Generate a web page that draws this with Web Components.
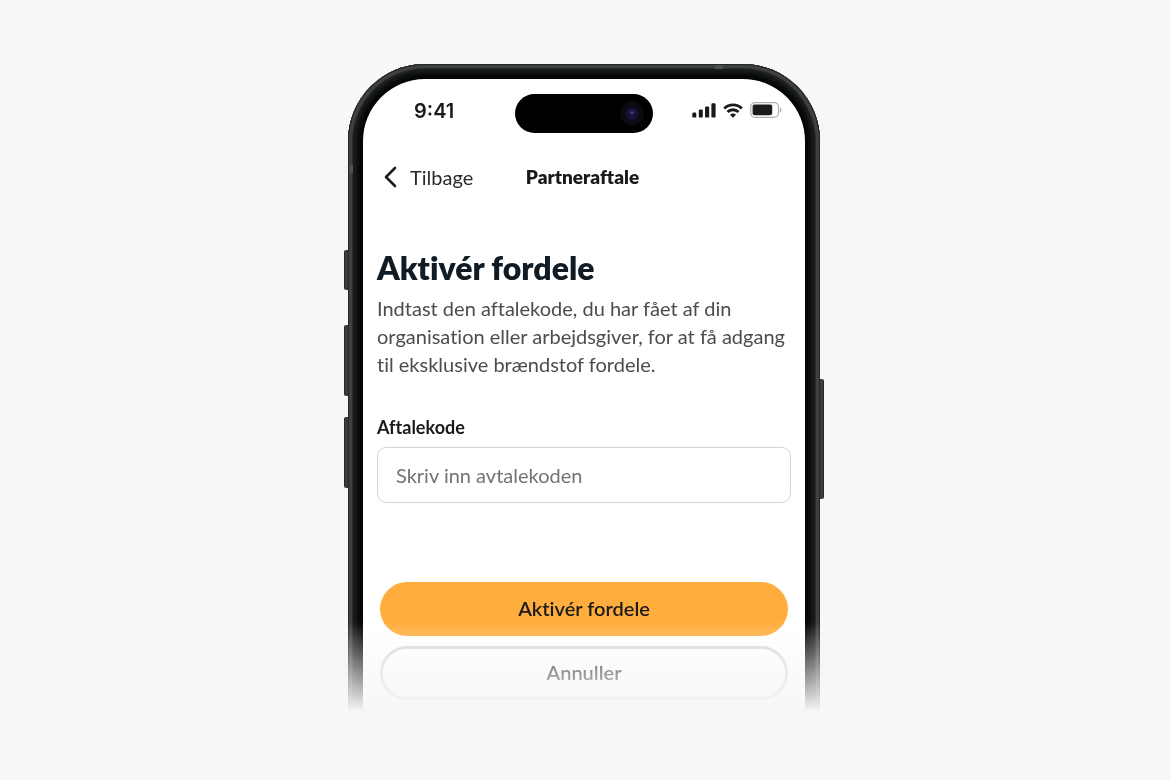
<!DOCTYPE html>
<html lang="da">
<head>
<meta charset="utf-8">
<meta name="viewport" content="width=device-width, initial-scale=1">
<title>Partneraftale</title>
<style>
  body { margin: 0; background: #f8f7f5; font-family: Lato, "Open Sans", sans-serif; font-variant-ligatures: none; color: #1a1a1a; }
</style>
</head>
<body>
<partner-page></partner-page>

<script>
const define = (name, html, setup) => customElements.define(name, class extends HTMLElement {
  constructor() {
    super();
    const root = this.attachShadow({ mode: "open" });
    root.innerHTML = html;
    if (setup) setup.call(this, root);
  }
});

define("status-bar", `
  <style>
    :host { display: grid; grid-template-columns: 1fr auto 1fr; align-items: start; padding: 15px 23px 0; }
    time { font: 600 20px/34px Inter, sans-serif; padding-left: 28px; color: #1a1a1a; }
    .island { width: 138px; height: 39px; }
    .icons { display: flex; justify-content: end; align-items: center; gap: 7px; height: 32px; }
    svg { display: block; }
  </style>
  <time>9:41</time>
  <svg class="island" viewBox="0 0 138 39" aria-hidden="true">
    <rect width="138" height="39" rx="19.5" fill="#000"/>
    <circle cx="117" cy="19.5" r="12" fill="#0c0a10"/>
    <circle cx="117" cy="19.5" r="7" fill="#12102b"/>
    <circle cx="117" cy="19.5" r="4" fill="#191543"/>
    <circle cx="117" cy="18.5" r="1.3" fill="#57538a"/>
  </svg>
  <div class="icons">
    <svg width="24" height="15" viewBox="0 0 24 15" fill="#1a1a1a" aria-hidden="true">
      <rect x="0.3" y="9.6" width="4" height="5" rx="1.2"/>
      <rect x="6.8" y="6.6" width="4" height="8" rx="1.2"/>
      <rect x="13" y="3.6" width="4.2" height="11" rx="1.2"/>
      <rect x="19.4" y="0.2" width="4.2" height="14.4" rx="1.2"/>
    </svg>
    <svg width="20" height="15" viewBox="0 0 20 15" fill="none" stroke="#1a1a1a" stroke-width="2.9" aria-hidden="true">
      <path d="M1.2 5.5A12.6 12.6 0 0 1 18.8 5.5"/>
      <path d="M4.5 9A7.8 7.8 0 0 1 15.5 9"/>
      <path d="M10 14.8 7 11.8A4.2 4.2 0 0 1 13 11.8Z" fill="#1a1a1a" stroke="none"/>
    </svg>
    <svg width="32" height="16" viewBox="0 0 32 16" aria-hidden="true">
      <rect x="0.7" y="0.7" width="27.8" height="14.6" rx="4.3" fill="none" stroke="#b0b0b0" stroke-width="1.3"/>
      <rect x="2.6" y="2.6" width="19.6" height="10.6" rx="2" fill="#1a1a1a"/>
      <path d="M30 5.6a2.6 2.6 0 0 1 0 4.8z" fill="#b0b0b0"/>
    </svg>
  </div>`);

define("nav-bar", `
  <style>
    :host { display: grid; grid-template-columns: 1fr auto 1fr; align-items: center; padding: 0 24px 0 21px; height: 28px; }
    a { display: flex; align-items: center; gap: 12px; color: #2b2b2b; text-decoration: none; font-size: 20px; line-height: 28px; }
    h2 { margin: 0; font-size: 19px; line-height: 28px; font-weight: 800; color: #1a1a1a; }
    svg { display: block; }
  </style>
  <a href="#"><svg width="14" height="22" viewBox="0 0 14 22" fill="none" stroke="#1a1a1a" stroke-width="2.6" stroke-linecap="round" stroke-linejoin="round" aria-hidden="true"><path d="M11 2 2 11l9 9"/></svg><slot name="back"></slot></a>
  <h2><slot></slot></h2>`);

define("text-field", `
  <style>
    :host { display: block; }
    label { display: block; font-size: 18px; line-height: 24px; font-weight: 700; color: #1a1a1a; }
    input { display: block; box-sizing: border-box; width: 100%; height: 56px; margin: 8px 0 0; padding: 0 18px; border: 1px solid #d4d4d4; border-radius: 9px; background: #fff; font: 400 20px/24px Lato, sans-serif; font-variant-ligatures: none; color: #1a1a1a; outline: 0; }
    input::placeholder { color: #757272; opacity: 1; }
  </style>
  <label for="f"></label><input id="f" type="text">`, function (root) {
    root.querySelector("label").textContent = this.getAttribute("label");
    root.querySelector("input").placeholder = this.getAttribute("placeholder");
  });

define("pill-button", `
  <style>
    :host { display: block; }
    button { display: block; box-sizing: border-box; width: 100%; height: 54px; padding: 0 0 2px; border: 0; border-radius: 27px; background: #ffae3e; color: #1a1a1a; font: 600 20px/24px Lato, sans-serif; font-variant-ligatures: none; }
    :host([outline]) button { background: transparent; border: 3px solid #dadada; }
  </style>
  <button type="button"><slot></slot></button>`);

define("phone-frame", `
  <style>
    :host { display: block; position: relative; box-sizing: border-box; width: 472px; max-width: 96%; padding: 15px 15px 0; border-radius: 77px 77px 0 0;
      background: #050505;
      box-shadow: inset 0 0 0 1px #262727, inset 0 0 0 4px #3f4040, inset 0 0 0 5px #2a2b2b, inset 0 0 5px 9px #1c2020;
      mask: linear-gradient(#000 calc(100% - 90px), transparent) -4px 0 / calc(100% + 8px) 100% no-repeat;
      mask-clip: no-clip; }
    .screen { background: #fff; border-radius: 62px 62px 0 0; }
    i { position: absolute; width: 4px; background: linear-gradient(90deg, #1d1d1d, #454545 50%, #303030); border-radius: 2px 0 0 2px; left: -4px; }
    .action { top: 186px; height: 40px; }
    .up { top: 261px; height: 71px; }
    .down { top: 353px; height: 71px; }
    .power { left: auto; right: -4px; top: 315px; height: 120px; border-radius: 0 2px 2px 0; background: linear-gradient(90deg, #303030, #454545 50%, #1d1d1d); }
    .top-band { left: auto; right: 97px; top: 1px; width: 8px; height: 4px; background: #4e4e4e; border-radius: 0; }
    .side-band { left: 1px; top: 101px; width: 4px; height: 8px; background: #4e4e4e; border-radius: 0; }
  </style>
  <i class="action"></i><i class="up"></i><i class="down"></i><i class="power"></i>
  <i class="top-band"></i><i class="side-band"></i>
  <div class="screen"><slot></slot></div>`);

define("partner-page", `
  <style>
    :host { display: flex; justify-content: center; padding: 64px 2px 68px 0; }
    nav-bar { margin-top: 30px; }
    section { padding: 59px 14px 0; }
    h1 { margin: 0; font-size: 32px; line-height: 36px; font-weight: 800; color: #101b24; }
    p { margin: 8px 0 0; font-size: 20px; line-height: 28px; color: #4c4c4c; }
    text-field { margin-top: 37px; }
    .actions { display: grid; gap: 10px; padding: 79px 3px 12px; }
  </style>
  <phone-frame>
    <status-bar></status-bar>
    <nav-bar><span slot="back">Tilbage</span>Partneraftale</nav-bar>
    <section>
      <h1>Aktivér fordele</h1>
      <p>Indtast den aftalekode, du har fået af din organisation eller arbejdsgiver, for at få adgang til eksklusive brændstof fordele.</p>
      <text-field label="Aftalekode" placeholder="Skriv inn avtalekoden"></text-field>
      <div class="actions">
        <pill-button>Aktivér fordele</pill-button>
        <pill-button outline>Annuller</pill-button>
      </div>
    </section>
  </phone-frame>`);
</script>
</body>
</html>
